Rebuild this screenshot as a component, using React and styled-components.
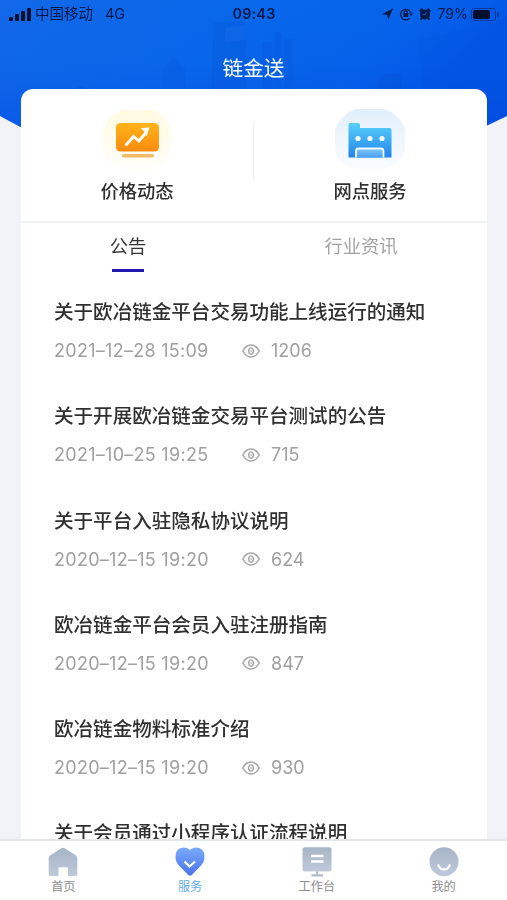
import React from "react";
import styled, { createGlobalStyle } from "styled-components";

const notices = [
  { title: "关于欧冶链金平台交易功能上线运行的通知", date: "2021–12–28 15:09", views: 1206 },
  { title: "关于开展欧冶链金交易平台测试的公告", date: "2021–10–25 19:25", views: 715 },
  { title: "关于平台入驻隐私协议说明", date: "2020–12–15 19:20", views: 624 },
  { title: "欧冶链金平台会员入驻注册指南", date: "2020–12–15 19:20", views: 847 },
  { title: "欧冶链金物料标准介绍", date: "2020–12–15 19:20", views: 930 },
  { title: "关于会员通过小程序认证流程说明" },
];

const Skyline = () => (
  <Backdrop viewBox="0 0 507 130" aria-hidden="true">
    <defs>
      <linearGradient id="sky" x1="0" y1="0" x2="1" y2="0.25">
        <stop offset="0" stopColor="#1268e8" />
        <stop offset="0.5" stopColor="#0867ea" />
        <stop offset="0.8" stopColor="#0562ea" />
        <stop offset="1" stopColor="#0356e6" />
      </linearGradient>
      <linearGradient id="shade" x1="0" y1="0" x2="0" y2="1">
        <stop offset="0" stopColor="#0646d8" stopOpacity="0" />
        <stop offset="0.5" stopColor="#0545dc" stopOpacity="0.04" />
        <stop offset="1" stopColor="#0540e4" stopOpacity="0.35" />
      </linearGradient>
    </defs>
    <path d="M0 0H507V116L484 127V130H26L0 116Z" fill="url(#sky)" />
    <path d="M0 0H507V116L484 127V130H26L0 116Z" fill="url(#shade)" />
    <g fill="#0649c8" opacity="0.18">
      <path d="M214 23L246 20V90H211Z" />
      <path d="M163 68L173 57L185 69V90H163Z" opacity="0.5" />
      <path d="M262 42H272V90H262ZM275 32H281V90H275ZM285 39H293V90H285Z" opacity="0.8" />
      <path d="M379 77L385 74H402V90H379Z" />
      <path d="M74 89Q80 83 87 89Z" />
      <path d="M418 40L507 18V116L487 125V90H424Z" opacity="0.4" />
    </g>
    <path d="M225 28L246 25V40L225 42Z" fill="#2173ee" opacity="0.3" />
  </Backdrop>
);

const StatusIcons = () => (
  <svg width="52" height="14" viewBox="0 0 52 14">
    <path d="M.8 7.2L12 1.6L7.2 12.8L6.3 7.7Z" fill="#031844" />
    <g fill="none" stroke="#031844" strokeWidth="1.2">
      <path d="M28.6 11.4A5.3 5.3 0 1 1 30 6" />
      <path d="M23.2 6.5V5.4a1.6 1.6 0 0 1 3.2 0V6.5" />
    </g>
    <path d="M22.4 6.2h4.8v3.7H22.4ZM28.2 6.6h3.6l-1.8 2.4Z" fill="#031844" />
    <circle cx="44" cy="7.5" r="5" fill="#031844" />
    <path d="M38.8 4.2L41.5 1.8M49.2 4.2L46.5 1.8M40.6 11L39.6 12.7M47.4 11L48.4 12.7" stroke="#031844" strokeWidth="2" />
    <path d="M45.4 4.8L44.2 7.8H41.4" stroke="#0b5bdc" strokeWidth="1" fill="none" />
  </svg>
);

const PriceIcon = () => (
  <svg width="72" height="66" viewBox="0 0 72 66">
    <defs>
      <linearGradient id="orange" x1="0" y1="0" x2="0" y2="1">
        <stop offset="0" stopColor="#ffb31b" />
        <stop offset="1" stopColor="#fb8b0c" />
      </linearGradient>
      <linearGradient id="cream" x1="0" y1="0" x2="0" y2="1">
        <stop offset="0" stopColor="#fffbe2" />
        <stop offset="1" stopColor="#fffefa" />
      </linearGradient>
    </defs>
    <path d="M20 2H51Q70 8 71 31Q70 58 50 62H22Q2 56 1 33Q2 10 20 2Z" fill="url(#cream)" />
    <rect x="15" y="15" width="43" height="28.5" rx="4.5" fill="url(#orange)" />
    <rect x="21" y="46" width="32" height="3.5" rx="1.5" fill="#f4b966" />
    <path d="M24.5 37.5L32.5 28.5L38 33L45.5 24" fill="none" stroke="#fff" strokeWidth="2.8" />
    <path d="M39.5 20L48.5 19.5L45.5 28.5L43.5 23.5Z" fill="#fff" />
  </svg>
);

const BranchIcon = () => (
  <svg width="72" height="66" viewBox="0 0 72 66">
    <defs>
      <linearGradient id="shop" x1="0" y1="0" x2="0" y2="1">
        <stop offset="0" stopColor="#58d1f8" />
        <stop offset="1" stopColor="#2583ec" />
      </linearGradient>
      <linearGradient id="mist" x1="0" y1="0" x2="0" y2="1">
        <stop offset="0" stopColor="#e2effb" />
        <stop offset="1" stopColor="#fafcff" />
      </linearGradient>
      <linearGradient id="door" x1="0" y1="0" x2="0" y2="1">
        <stop offset="0" stopColor="#82c7fa" />
        <stop offset="1" stopColor="#48a0f4" />
      </linearGradient>
    </defs>
    <path d="M22 1H50Q66 6 71 22V44Q64 58 51 61H20Q5 57 1 42V22Q6 7 22 1Z" fill="url(#mist)" />
    <path d="M14.5 49.5V16.5Q14.5 15 16 15H24.5Q26 15 26 16.5V20H55.5Q57.5 20 57.5 22V49.5Z" fill="url(#shop)" />
    <path d="M22 49.5V43Q22 40.5 24.5 40.5H47Q49.5 40.5 49.5 43V49.5" fill="url(#door)" stroke="#f3faff" strokeWidth="1.8" />
    <g fill="#f5fcff">
      <circle cx="24" cy="30.5" r="2.6" />
      <circle cx="36" cy="30.5" r="2.6" />
      <circle cx="48" cy="30.5" r="2.6" />
    </g>
  </svg>
);

const EyeIcon = () => (
  <svg width="18" height="14" viewBox="0 0 18 14" fill="none" stroke="#a4a4a4" strokeWidth="1.4">
    <path d="M.8 7C3 2.7 5.5 1 9 1S15 2.7 17.2 7C15 11.3 12.5 13 9 13S3 11.3 .8 7Z" />
    <ellipse cx="9" cy="7" rx="2.3" ry="3.1" />
    <path d="M9 6V8" strokeWidth="0.9" />
  </svg>
);

const NavGradients = () => (
  <defs>
    <linearGradient id="steel" x1="0" y1="0" x2="0" y2="1">
      <stop offset="0" stopColor="#a6b5c6" />
      <stop offset="1" stopColor="#bfc9db" />
    </linearGradient>
    <linearGradient id="heart" x1="0" y1="0" x2="0" y2="1">
      <stop offset="0" stopColor="#7baafa" />
      <stop offset="1" stopColor="#4a74ed" />
    </linearGradient>
  </defs>
);

const navItems = [
  {
    label: "首页",
    icon: (
      <path
        d="M15 .8Q16 .8 17 1.6L28 8.6Q29.3 9.6 29.3 11.6V27.5Q29.3 29 28 29H20V21.5Q20 20.3 19 20.3H12Q10.5 20.3 10.5 21.5V29H2Q.7 29 .7 27.5V11.6Q.7 9.6 2 8.6L13 1.6Q14 .8 15 .8Z"
        fill="url(#steel)"
      />
    ),
  },
  {
    label: "服务",
    active: true,
    icon: (
      <>
        <path
          d="M15 2.8Q12 .4 8.5.4Q.6 1.2.6 9V12Q1 15 3.5 18L13 27.8Q15 29.6 17 27.8L26.5 18Q29 15 29.4 12V9Q29.4 1.2 21.5.4Q18 .4 15 2.8Z"
          fill="url(#heart)"
        />
        <path d="M9.5 14.5L14.5 19.5L20 14.5" fill="none" stroke="#fff" strokeWidth="2.2" />
      </>
    ),
  },
  {
    label: "工作台",
    icon: (
      <>
        <rect x=".5" y=".3" width="29" height="24.2" rx="2.5" fill="url(#steel)" />
        <path d="M9 9H21.5M9 14.5H21.5" stroke="#fff" strokeWidth="2.5" />
        <path d="M15 24.5V28M9.5 28.3H21" stroke="#b0bac9" strokeWidth="2.2" />
      </>
    ),
  },
  {
    label: "我的",
    icon: (
      <>
        <circle cx="15" cy="14.7" r="14.5" fill="url(#steel)" />
        <path d="M9 17.5Q10.5 22.5 15 22.5T21 17.5" fill="none" stroke="#fff" strokeWidth="2.3" />
      </>
    ),
  },
];

const App = () => {
  return (
    <>
      <GlobalStyle />
      <Screen>
        <Skyline />
        <StatusBar>
          <Carrier>
            <Signal>
              <Bar $h={4} />
              <Bar $h={6.5} />
              <Bar $h={10} />
              <Bar $h={13} />
            </Signal>
            <span>中国移动</span>
            <Network>4G</Network>
          </Carrier>
          <Clock>09:43</Clock>
          <Indicators>
            <StatusIcons />
            <Percent>79%</Percent>
            <Battery>
              <Charge />
            </Battery>
            <BatteryTip />
          </Indicators>
        </StatusBar>
        <Header>链金送</Header>
        <Card>
          <Shortcuts>
            <Shortcut>
              <PriceIcon />
              <span>价格动态</span>
            </Shortcut>
            <Divider />
            <Shortcut>
              <BranchIcon />
              <span>网点服务</span>
            </Shortcut>
          </Shortcuts>
          <Tabs>
            <Tab $active>公告</Tab>
            <Tab>行业资讯</Tab>
          </Tabs>
          <List>
            {notices.map(({ title, date, views }) => (
              <Notice key={title}>
                <NoticeTitle>{title}</NoticeTitle>
                {date && (
                  <Meta>
                    <time>{date}</time>
                    <EyeIcon />
                    <Views>{views}</Views>
                  </Meta>
                )}
              </Notice>
            ))}
          </List>
        </Card>
        <BottomNav>
          {navItems.map(({ label, icon, active }) => (
            <NavItem key={label} $active={active}>
              <svg width="30" height="30" viewBox="0 0 30 30">
                <NavGradients />
                {icon}
              </svg>
              <span>{label}</span>
            </NavItem>
          ))}
        </BottomNav>
      </Screen>
    </>
  );
};

export default App;

const GlobalStyle = createGlobalStyle`
  * {
    box-sizing: border-box;
  }
  body {
    margin: 0;
    font-family: Inter, "Noto Sans CJK SC", sans-serif;
  }
  h2 {
    margin: 0;
  }
  svg {
    display: block;
    flex: none;
  }
`;

const Screen = styled.div`
  position: relative;
  display: flex;
  flex-direction: column;
  width: 507px;
  height: 900px;
  overflow: hidden;
  background: #f1f3f8;
`;

/* sits behind the status bar, the header and the top of the card */
const Backdrop = styled.svg`
  position: absolute;
  top: 0;
  left: 0;
  width: 507px;
  height: 130px;
  z-index: 0;
`;

const StatusBar = styled.div`
  z-index: 1;
  display: grid;
  grid-template-columns: 1fr auto 1fr;
  align-items: center;
  height: 28px;
  padding: 0 5px 0 9px;
  color: #04194a;
  font-size: 14.5px;
  line-height: 28px;
`;

const Carrier = styled.div`
  display: flex;
  align-items: center;
  white-space: nowrap;
`;

const Signal = styled.div`
  display: flex;
  align-items: flex-end;
  gap: 2px;
  height: 13px;
  margin-right: 4px;
`;

const Bar = styled.i`
  width: 4px;
  height: ${({ $h }) => $h}px;
  border-radius: 1px;
  background: #031030;
`;

const Network = styled.span`
  margin-left: 12px;
`;

const Clock = styled.div`
  margin-right: 3px;
  font-weight: 600;
  font-size: 14.4px;
  letter-spacing: 0.2px;
`;

const Indicators = styled.div`
  display: flex;
  align-items: center;
  justify-content: flex-end;
`;

const Percent = styled.span`
  margin: 0 3px 0 4px;
  font-size: 14.2px;
`;

const Battery = styled.div`
  display: flex;
  width: 25px;
  height: 13px;
  padding: 1px;
  border: 1px solid #0a3996;
  border-radius: 3px;
`;

const BatteryTip = styled.i`
  width: 2px;
  height: 5px;
  margin: 0 3px 0 1px;
  border-radius: 0 2px 2px 0;
  background: #0a3996;
`;

const Charge = styled.div`
  width: 83%;
  border-radius: 2px;
  background: #02102e;
`;

const Header = styled.header`
  z-index: 1;
  flex: none;
  height: 61px;
  padding-top: 26px;
  color: #fff;
  font-size: 20.7px;
  line-height: 30px;
  text-align: center;
`;

const Card = styled.main`
  z-index: 1;
  display: flex;
  flex-direction: column;
  flex: 1;
  min-height: 0;
  margin: 0 20px 0 21px;
  border-radius: 12px 12px 0 0;
  background: #fff;
  overflow: hidden;
`;

const Shortcuts = styled.div`
  display: flex;
  flex: none;
  height: 134px;
  padding: 19px 1px 0 0;
  border-bottom: 2px solid #f2f3f6;
`;

const Shortcut = styled.div`
  display: flex;
  flex: 1;
  flex-direction: column;
  align-items: center;
  color: #303030;
  font-size: 18.3px;
  font-weight: 500;
  line-height: 28px;
  span {
    margin-top: 3px;
  }
`;

const Divider = styled.div`
  width: 1px;
  height: 57px;
  margin-top: 15px;
  background: #efeff3;
`;

const Tabs = styled.div`
  display: flex;
  flex: none;
  height: 49px;
`;

const Tab = styled.div`
  display: flex;
  flex: ${({ $active }) => ($active ? "0 0 214px" : 1)};
  flex-direction: column;
  align-items: center;
  justify-content: space-between;
  padding-top: 9px;
  color: ${({ $active }) => ($active ? "#343434" : "#a3a3a3")};
  font-size: 18.3px;
  line-height: 28px;
  &::after {
    content: "";
    width: 32px;
    height: 3px;
    background: ${({ $active }) => ($active ? "#2119b0" : "transparent")};
  }
`;

const List = styled.div`
  display: flex;
  flex-direction: column;
  padding: 25px 0 0 33px;
`;

const Notice = styled.article`
  flex: none;
  height: 104.3px;
`;

const NoticeTitle = styled.h2`
  color: #303030;
  font-size: 19.56px;
  font-weight: 500;
  line-height: 30px;
  white-space: nowrap;
`;

const Meta = styled.div`
  display: flex;
  align-items: center;
  margin-top: 9px;
  color: #a0a0a0;
  font-size: 18px;
  line-height: 28px;
  time {
    width: 188px;
    padding-top: 1px;
    letter-spacing: 0.28px;
    white-space: nowrap;
  }
`;

const Views = styled.span`
  margin-left: 11px;
  padding-top: 1px;
`;

const BottomNav = styled.nav`
  z-index: 1;
  display: grid;
  grid-template-columns: repeat(4, 1fr);
  flex: none;
  height: 61px;
  padding-top: 6px;
  border-top: 2px solid #e4e5e8;
  background: #fff;
`;

const NavItem = styled.div`
  display: flex;
  flex-direction: column;
  align-items: center;
  color: ${({ $active }) => ($active ? "#64aee7" : "#8c8c8c")};
  font-size: 12.2px;
  line-height: 18px;
  span {
    margin-top: 1px;
  }
`;
